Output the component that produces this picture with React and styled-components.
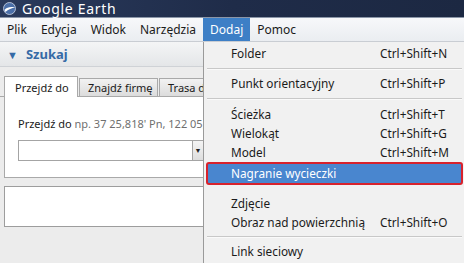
import React from "react";
import styled, { createGlobalStyle } from "styled-components";

const GlobalStyle = createGlobalStyle`
  body {
    margin: 0;
    font-family: "Noto Sans", "Open Sans", sans-serif;
    background: #ececec;
  }
`;

const Window = styled.div`
  position: relative;
  width: 464px;
  height: 263px;
  overflow: hidden;
  background: #ececec;
  font-size: 11.5px;
  color: #1b1b1b;
`;

const TitleBar = styled.div`
  height: 18px;
  box-sizing: border-box;
  display: flex;
  align-items: center;
  gap: 6px;
  padding-left: 3px;
  background: linear-gradient(90deg, #2a3a5c 0%, #1f2c49 50%, #1c2842 100%);
  border-bottom: 1px solid #8b96a8;
`;

const TitleText = styled.span`
  color: #fff;
  font-size: 14px;
  line-height: 16px;
  letter-spacing: 0.7px;
  white-space: nowrap;
`;

const MenuBar = styled.div`
  height: 23px;
  display: flex;
  align-items: stretch;
  background: linear-gradient(#f7f8fa, #eaedf1);
  border-bottom: 1px solid #c9cdd3;
`;

const MenuTop = styled.div`
  display: flex;
  align-items: center;
  padding: 0 7px;
  font-size: 12px;
  background: ${(p) => (p.$active ? "#3d7fc6" : "transparent")};
  color: ${(p) => (p.$active ? "#fff" : "#1b1b1b")};
`;

const SidePanel = styled.div`
  display: flex;
  flex-direction: column;
`;

const PanelHeader = styled.div`
  height: 24px;
  display: flex;
  align-items: center;
  gap: 8px;
  padding-left: 7px;
  background: linear-gradient(#f4f5f6, #e4e6e8);
  border-bottom: 1px solid #cfd2d6;
  color: #356aa6;
  font-weight: bold;
  font-size: 13px;
`;

const Arrow = styled.span`
  font-size: 11px;
`;

const TabStrip = styled.div`
  display: flex;
  align-items: flex-end;
  gap: 1px;
  margin-top: 8px;
  padding-left: 4px;
  height: 21px;
  border-bottom: 1px solid #a9a9a9;
`;

const Tab = styled.div`
  height: ${(p) => (p.$active ? 21 : 18)}px;
  width: ${(p) => p.$w}px;
  box-sizing: border-box;
  display: flex;
  align-items: center;
  padding-left: ${(p) => (p.$active ? 10 : 8)}px;
  border: 1px solid #a9a9a9;
  border-bottom: none;
  background: ${(p) => (p.$active ? "#fff" : "linear-gradient(#f2f2f2, #dcdcdc)")};
  margin-bottom: ${(p) => (p.$active ? -1 : 0)}px;
  font-size: 11px;
  white-space: nowrap;
  overflow: hidden;
`;

const TabBody = styled.div`
  margin-left: 4px;
  height: 81px;
  box-sizing: border-box;
  background: #fff;
  border-left: 1px solid #a9a9a9;
  border-bottom: 1px solid #a9a9a9;
  padding: 19px 0 0 13px;
`;

const Hint = styled.div`
  font-size: 11px;
  white-space: nowrap;
  b {
    font-weight: normal;
    color: #1b1b1b;
  }
  span {
    color: #6f6f6f;
  }
`;

const SearchRow = styled.div`
  margin-top: 9px;
  width: 186px;
  height: 21px;
  display: flex;
  border: 1px solid #a4a4a4;
  box-sizing: border-box;
`;

const SearchInput = styled.div`
  flex: 1;
  background: #fff;
`;

const DropButton = styled.div`
  width: 10px;
  background: linear-gradient(#f4f4f4, #dedede);
  border-left: 1px solid #a4a4a4;
  display: flex;
  align-items: center;
  justify-content: center;
  font-size: 7px;
  color: #222;
`;

const ResultBox = styled.div`
  margin: 8px 0 0 4px;
  height: 39px;
  background: #fff;
  border: 1px solid #9d9d9d;
`;

const DropMenu = styled.div`
  position: absolute;
  top: 42px;
  left: 203px;
  right: 0;
  bottom: 0;
  background: #f1f1f1;
  border-left: 1px solid #9a9a9a;
  padding-top: 2px;
  box-sizing: border-box;
`;

const Item = styled.div`
  height: ${(p) => (p.$hl ? 23 : 19)}px;
  display: flex;
  align-items: center;
  margin: ${(p) => (p.$hl ? "0 1px 0 2px" : "0")};
  padding-left: ${(p) => (p.$hl ? 23 : 27)}px;
  box-sizing: border-box;
  font-size: 11.8px;
  line-height: 15px;
  white-space: nowrap;
  color: ${(p) => (p.$hl ? "#fff" : "#1b1b1b")};
  background: ${(p) => (p.$hl ? "#4986cf" : "transparent")};
  border: ${(p) => (p.$hl ? "2.5px solid #d8222c" : "none")};
  border-radius: ${(p) => (p.$hl ? 3 : 0)}px;
`;

const Label = styled.span`
  width: 149px;
`;

const Shortcut = styled.span``;

const Separator = styled.div`
  height: ${(p) => p.$h || 11}px;
  display: flex;
  align-items: center;
  padding: 0 2px 0 3px;
  &::after {
    content: "";
    flex: 1;
    height: 1px;
    background: ${(p) => (p.$hidden ? "transparent" : "#c8c8c8")};
    border-bottom: 1px solid ${(p) => (p.$hidden ? "transparent" : "#fafafa")};
  }
`;

const EarthIcon = () => (
  <svg width="13" height="13" viewBox="0 0 13 13">
    <circle cx="6.5" cy="6.5" r="6" fill="#4b6fa8" stroke="#cfd8e8" strokeWidth="0.8" />
    <path d="M1.5 8 C4 5, 8 4.5, 12 5.5 C9 6, 5 7.5, 2.5 10 Z" fill="#fff" />
  </svg>
);

const menuItems = [
  { label: "Folder", sc: "Ctrl+Shift+N" },
  { sep: true },
  { label: "Punkt orientacyjny", sc: "Ctrl+Shift+P" },
  { sep: true, h: 12 },
  { label: "Ścieżka", sc: "Ctrl+Shift+T" },
  { label: "Wielokąt", sc: "Ctrl+Shift+G" },
  { label: "Model", sc: "Ctrl+Shift+M" },
  { label: "Nagranie wycieczki", hl: true },
  { sep: true, hidden: true, h: 9 },
  { label: "Zdjęcie" },
  { label: "Obraz nad powierzchnią", sc: "Ctrl+Shift+O" },
  { sep: true, h: 10 },
  { label: "Link sieciowy" },
];

export default function App() {
  return (
    <Window>
      <GlobalStyle />
      <TitleBar>
        <EarthIcon />
        <TitleText>Google Earth</TitleText>
      </TitleBar>
      <MenuBar>
        <MenuTop>Plik</MenuTop>
        <MenuTop>Edycja</MenuTop>
        <MenuTop>Widok</MenuTop>
        <MenuTop>Narzędzia</MenuTop>
        <MenuTop $active>Dodaj</MenuTop>
        <MenuTop>Pomoc</MenuTop>
      </MenuBar>
      <SidePanel>
        <PanelHeader>
          <Arrow>▼</Arrow>
          Szukaj
        </PanelHeader>
        <TabStrip>
          <Tab $active $w={74}>Przejdź do</Tab>
          <Tab $w={79}>Znajdź firmę</Tab>
          <Tab $w={60}>Trasa do</Tab>
        </TabStrip>
        <TabBody>
          <Hint>
            <b>Przejdź do</b> <span>np. 37 25,818' Pn, 122 05,36' Zd</span>
          </Hint>
          <SearchRow>
            <SearchInput />
            <DropButton>▼</DropButton>
          </SearchRow>
        </TabBody>
        <ResultBox />
      </SidePanel>
      <DropMenu>
        {menuItems.map((m, i) =>
          m.sep ? (
            <Separator key={i} $h={m.h} $hidden={m.hidden} />
          ) : (
            <Item key={i} $hl={m.hl}>
              <Label>{m.label}</Label>
              {m.sc && <Shortcut>{m.sc}</Shortcut>}
            </Item>
          )
        )}
      </DropMenu>
    </Window>
  );
}
